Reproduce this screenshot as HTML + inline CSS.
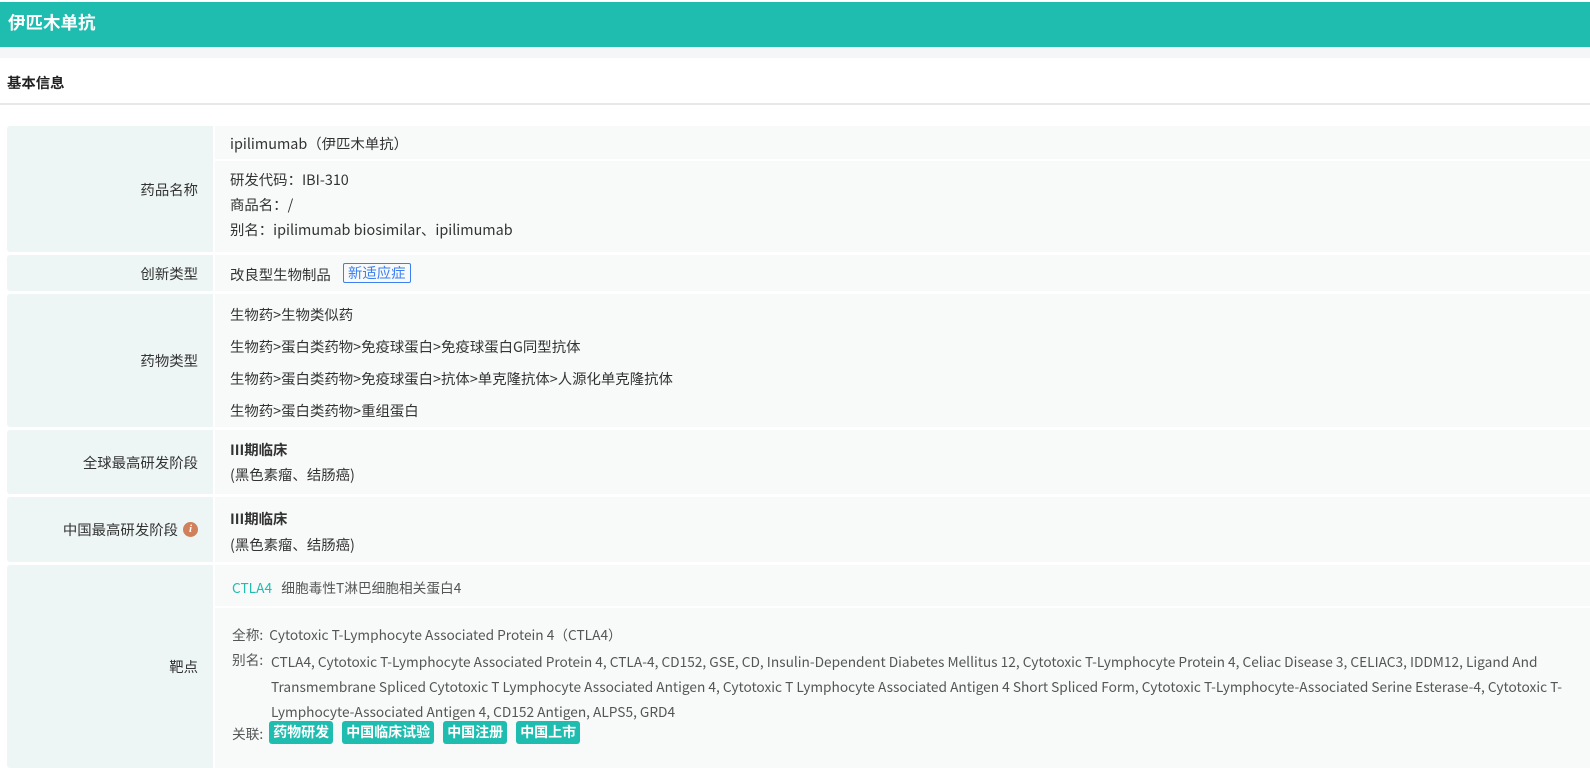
<!DOCTYPE html>
<html><head><meta charset="utf-8"><style>
*{margin:0;padding:0;box-sizing:border-box}
body{width:1590px;height:768px;overflow:hidden;background:#fff;font-family:"Noto Sans CJK SC","Liberation Sans",sans-serif;color:#333;font-size:14.4px;position:relative}
.a{position:absolute;white-space:nowrap;line-height:20px}
.lb{position:absolute;left:7px;width:206px;background:#eef6f5;text-align:right;padding-right:15px;display:flex;align-items:center;justify-content:flex-end;color:#333;border-radius:3px 0 0 3px}
.vb{position:absolute;left:215px;right:0;background:#f8fafa}
.tag{display:inline-block;background:#1fbdb0;color:#fff;font-weight:bold;font-size:14px;padding:0 4px;border-radius:3px;margin-right:9px;line-height:23px}
.s{font-size:13.7px;color:#555}
</style></head><body>
<div class="a" style="left:0;top:2px;width:1590px;height:45px;background:#1fbdb0"></div>
<div class="a" style="left:8px;top:13px;color:#fff;font-size:17.5px;font-weight:bold">伊匹木单抗</div>
<div class="a" style="left:0;top:47px;width:1590px;height:11px;background:#f5f6f8"></div>
<div class="a" style="left:0;top:103px;width:1590px;height:2px;background:#e8e8e8"></div>
<div class="a" style="left:7px;top:73px;font-size:14.4px;font-weight:bold;color:#222">基本信息</div>

<div class="lb" style="top:126px;height:126px">药品名称</div>
<div class="vb" style="top:126px;height:33px"></div>
<div class="vb" style="top:161px;height:91px"></div>
<div class="a" style="left:230px;top:134px">ipilimumab（伊匹木单抗）</div>
<div class="a" style="left:230px;top:170px">研发代码：IBI-310</div>
<div class="a" style="left:230px;top:195px">商品名：/</div>
<div class="a" style="left:230px;top:220px">别名：ipilimumab biosimilar、ipilimumab</div>

<div class="lb" style="top:255px;height:36px">创新类型</div>
<div class="vb" style="top:255px;height:36px"></div>
<div class="a" style="left:230px;top:265px">改良型生物制品</div>
<div class="a" style="left:343px;top:263px;border:1px solid #3d7ff0;color:#3d7ff0;padding:0 4px;line-height:18px;border-radius:2px">新适应症</div>

<div class="lb" style="top:294px;height:133px">药物类型</div>
<div class="vb" style="top:294px;height:133px"></div>
<div class="a" style="left:230px;top:305px">生物药&gt;生物类似药</div>
<div class="a" style="left:230px;top:337px">生物药&gt;蛋白类药物&gt;免疫球蛋白&gt;免疫球蛋白G同型抗体</div>
<div class="a" style="left:230px;top:369px">生物药&gt;蛋白类药物&gt;免疫球蛋白&gt;抗体&gt;单克隆抗体&gt;人源化单克隆抗体</div>
<div class="a" style="left:230px;top:401px">生物药&gt;蛋白类药物&gt;重组蛋白</div>

<div class="lb" style="top:430px;height:64px">全球最高研发阶段</div>
<div class="vb" style="top:430px;height:64px"></div>
<div class="a" style="left:230px;top:440px;font-weight:bold">III期临床</div>
<div class="a" style="left:230px;top:465px">(黑色素瘤、结肠癌)</div>

<div class="lb" style="top:497px;height:65px">中国最高研发阶段<span style="display:inline-block;width:15px;height:15px;border-radius:50%;background:#d0805a;color:#fff;font-size:11px;font-style:italic;font-family:'Liberation Serif',serif;text-align:center;line-height:15px;margin-left:5px;font-weight:bold">i</span></div>
<div class="vb" style="top:497px;height:65px"></div>
<div class="a" style="left:230px;top:509px;font-weight:bold">III期临床</div>
<div class="a" style="left:230px;top:535px">(黑色素瘤、结肠癌)</div>

<div class="lb" style="top:565px;height:203px">靶点</div>
<div class="vb" style="top:565px;height:41px"></div>
<div class="vb" style="top:608px;height:160px"></div>
<div class="a" style="left:232px;top:577px;font-size:13.7px"><span style="color:#1fbdb0">CTLA4</span>&nbsp;&nbsp; <span style="color:#555">细胞毒性T淋巴细胞相关蛋白4</span></div>
<div class="a s" style="left:232px;top:624px">全称:&nbsp; Cytotoxic T-Lymphocyte Associated Protein 4（CTLA4）</div>
<div class="a s" style="left:232px;top:649px">别名:</div>
<div class="a s" style="left:271px;top:649px;white-space:normal;width:1300px;line-height:25px">CTLA4, Cytotoxic T-Lymphocyte Associated Protein 4, CTLA-4, CD152, GSE, CD, Insulin-Dependent Diabetes Mellitus 12, Cytotoxic T-Lymphocyte Protein 4, Celiac Disease 3, CELIAC3, IDDM12, Ligand And Transmembrane Spliced Cytotoxic T Lymphocyte Associated Antigen 4, Cytotoxic T Lymphocyte Associated Antigen 4 Short Spliced Form, Cytotoxic T-Lymphocyte-Associated Serine Esterase-4, Cytotoxic T-Lymphocyte-Associated Antigen 4, CD152 Antigen, ALPS5, GRD4</div>
<div class="a s" style="left:232px;top:721px;display:flex;align-items:center"><span style="margin-right:6px">关联:</span><span class="tag">药物研发</span><span class="tag">中国临床试验</span><span class="tag">中国注册</span><span class="tag">中国上市</span></div>
</body></html>
